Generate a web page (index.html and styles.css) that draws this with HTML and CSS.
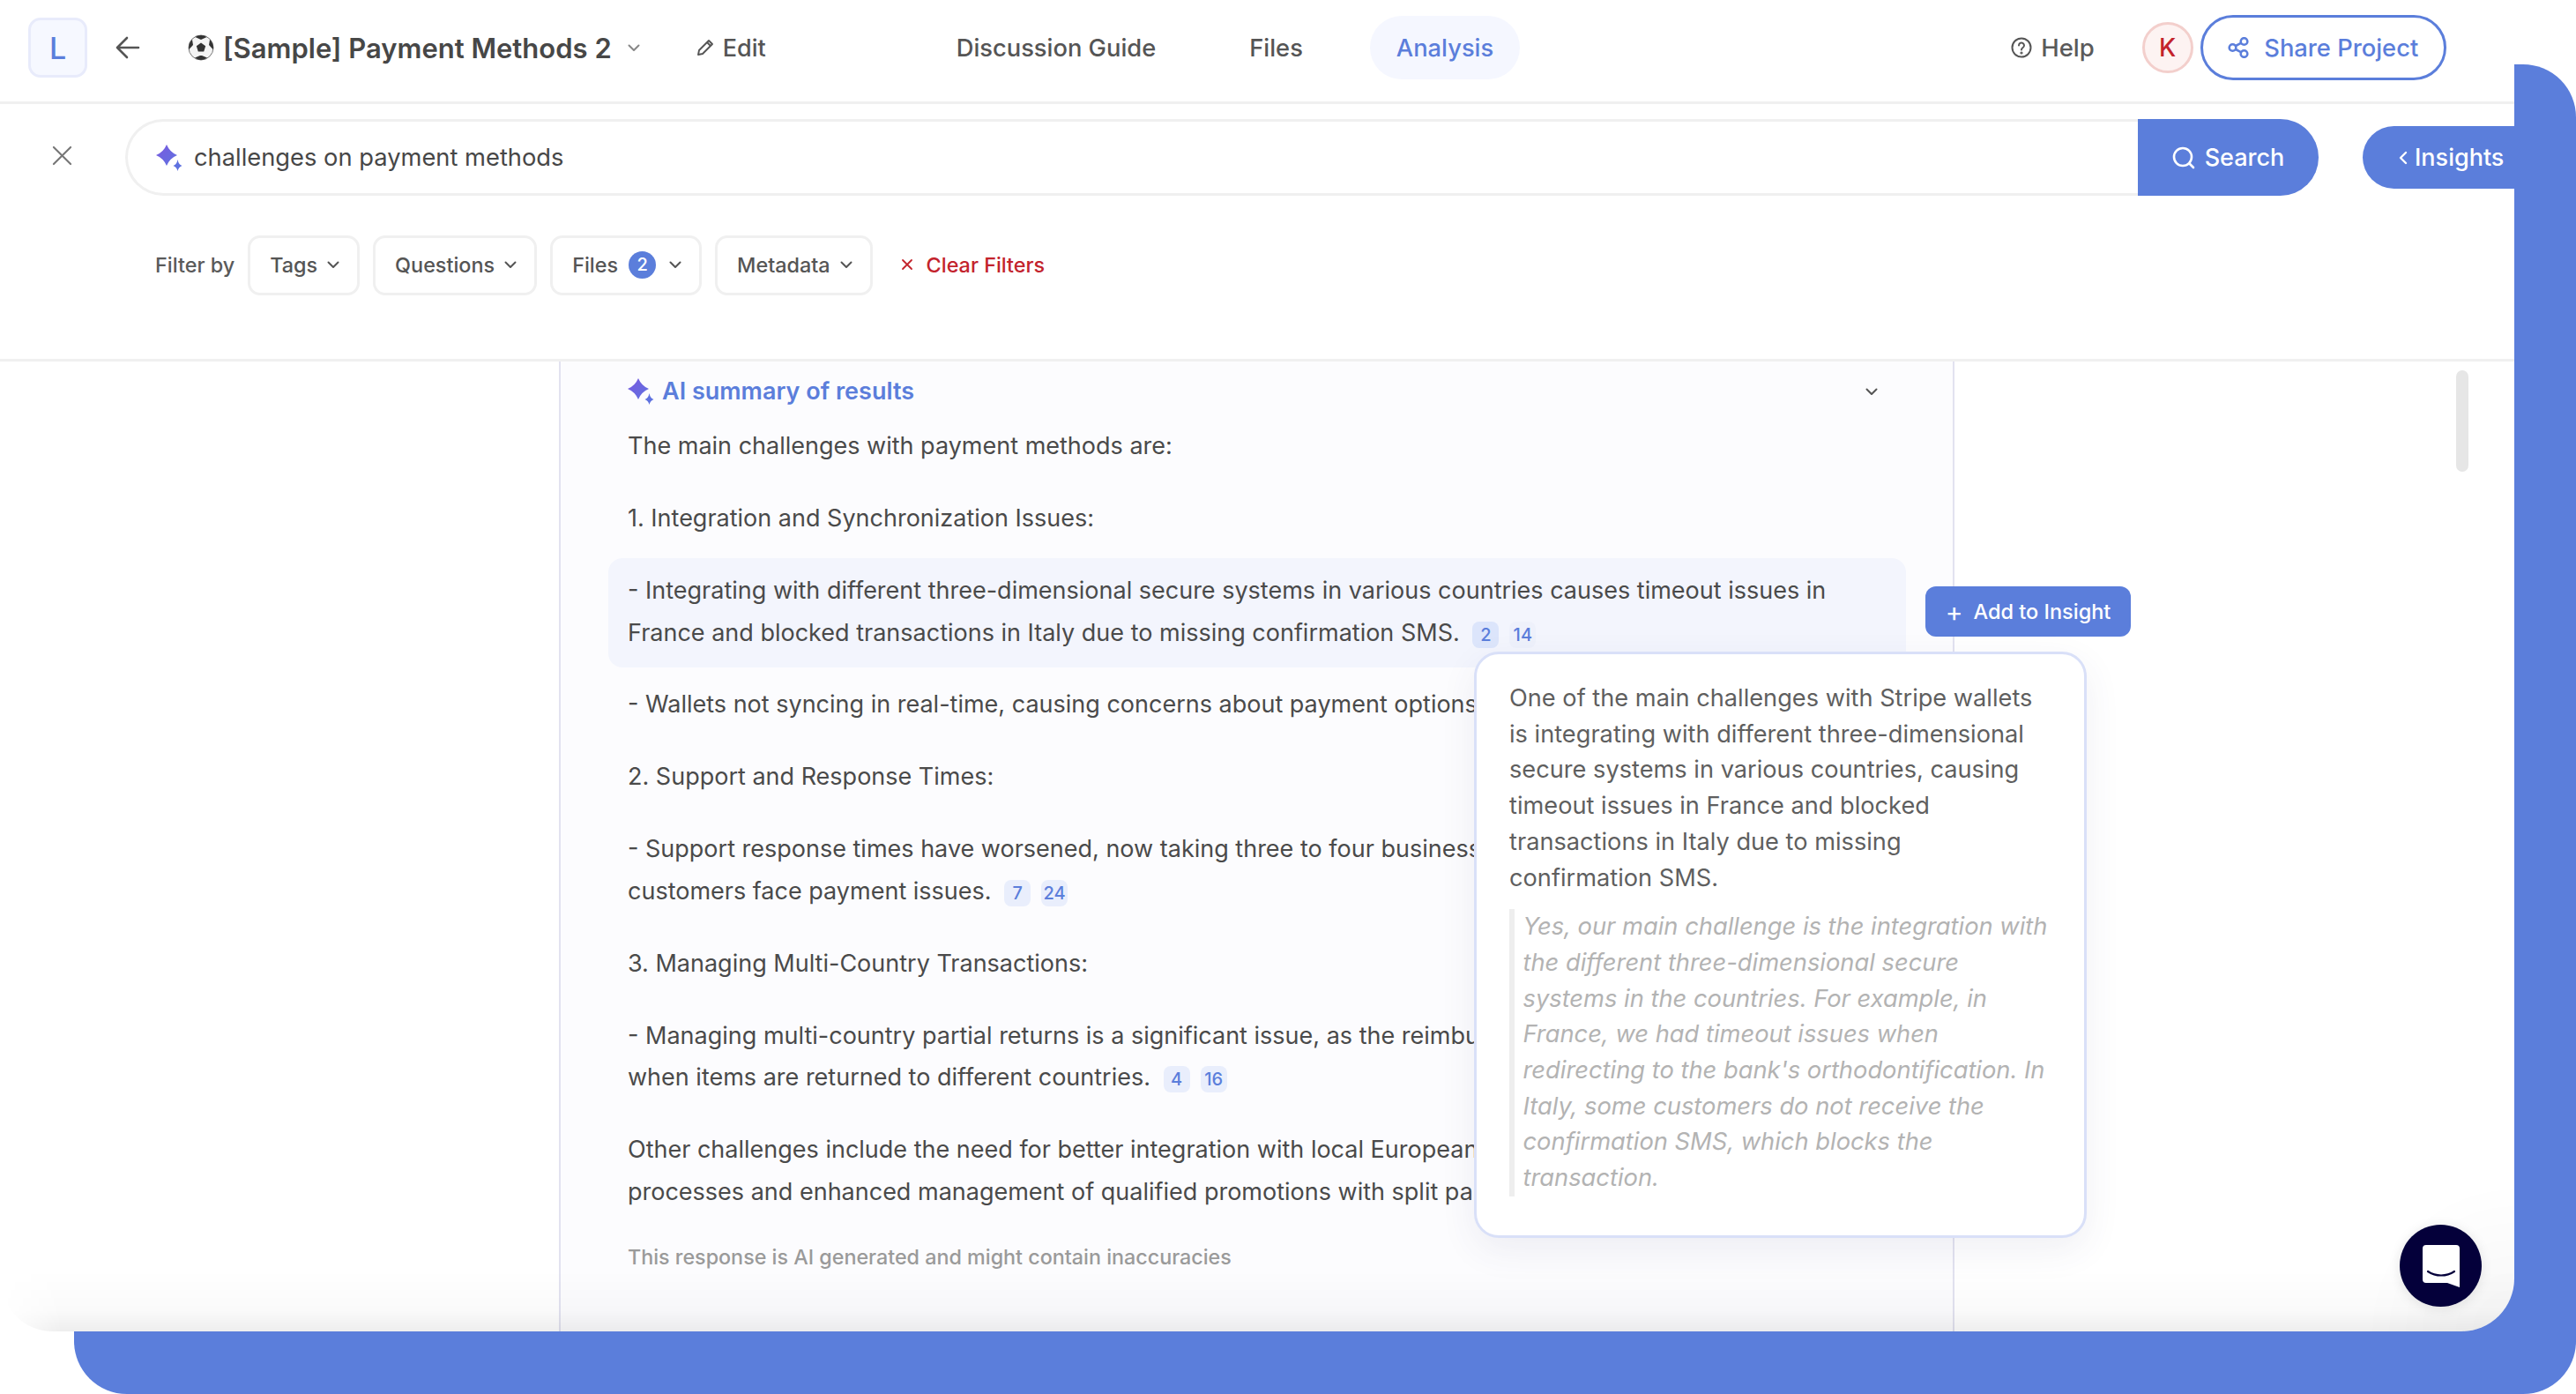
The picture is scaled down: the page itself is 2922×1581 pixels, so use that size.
FILE: index.html
```html
<!DOCTYPE html>
<html lang="en">
<head>
    <meta charset="UTF-8">
    <meta name="viewport" content="width=device-width, initial-scale=1.0">
    <title>[Sample] Payment Methods 2 - Analysis</title>
    <link rel="stylesheet" href="styles.css">
</head>
<body>
    <svg class="defs" width="0" height="0">
        <defs>
            <linearGradient id="spark" x1="0" y1="0" x2="1" y2="1">
                <stop offset="0" stop-color="#7a5ae0"/>
                <stop offset="1" stop-color="#5f72e0"/>
            </linearGradient>
        </defs>
    </svg>

    <div class="backdrop"></div>

    <div class="panel">
        <header class="topbar">
            <div class="logo">L</div>
            <svg class="back" viewBox="0 0 28 26" fill="none" stroke="#555" stroke-width="2.6" stroke-linecap="round" stroke-linejoin="round"><path d="M26 13H2M13 2 2 13l11 11"/></svg>
            <svg class="ball" viewBox="0 0 30 30">
                <circle cx="15" cy="15" r="14" fill="#f4f4f4" stroke="#777" stroke-width="1"/>
                <path d="M15 9.500l5.200 3.800-2 6.200h-6.400l-2-6.200z" fill="#333"/>
                <path d="M15 1c2.600 0 4.800.7 6.600 2L15 6 8.400 3C10.200 1.700 12.400 1 15 1zM1.200 14c.2-3.400 1.600-6.300 3.800-8.300L6 12l-4.800 5.200c0-1-.1-2.100 0-3.200zM29 15c0 .8 0 1.500-.2 2.200L24 12l1-6.300c2.400 2.300 4 5.700 4 9.300zM8 26.600l6-2.600h2l6 2.600c-2 1.500-4.300 2.400-7 2.400s-5-.9-7-2.400z" fill="#333"/>
            </svg>
            <span class="project-name">[Sample] Payment Methods 2</span>
            <svg class="chev chev-title" viewBox="0 0 14 9"><path d="M1.500 1.500 7 7l5.500-5.500"/></svg>
            <svg class="pencil" viewBox="0 0 20 20" fill="none" stroke="#555" stroke-width="1.900" stroke-linejoin="round"><path d="M2 18l1-5L14 2l4 4L7 17z"/><path d="M12 4l4 4"/></svg>
            <span class="edit">Edit</span>

            <nav class="tabs">
                <a class="tab">Discussion Guide</a>
                <a class="tab">Files</a>
                <a class="tab tab-active">Analysis</a>
            </nav>

            <div class="help">
                <svg viewBox="0 0 24 24" fill="none" stroke="#555" stroke-width="2"><circle cx="12" cy="12" r="10.500"/><path d="M9 9.500a3 3 0 1 1 4.600 2.500c-1 .7-1.600 1.300-1.600 2.500" stroke-linecap="round"/><circle cx="12" cy="18" r=".6" fill="#555"/></svg>
                <span>Help</span>
            </div>
            <div class="avatar">K</div>
            <button class="share">
                <svg viewBox="0 0 24 24" fill="none" stroke="#5b7edb" stroke-width="2.600"><circle cx="5.500" cy="12" r="3.800"/><circle cx="18.500" cy="5" r="3.800"/><circle cx="18.500" cy="19" r="3.800"/><path d="M9 10l6-3.200M9 14l6 3.200"/></svg>
                Share Project
            </button>
        </header>

        <div class="search-row">
            <svg class="close" viewBox="0 0 24 24" fill="none" stroke="#777" stroke-width="2.200" stroke-linecap="round"><path d="M2 2l20 20M22 2 2 22"/></svg>
            <div class="searchbox">
                <svg class="spark" viewBox="0 0 30 30"><path d="M12 0Q15.500 8.500 24 12 15.500 15.500 12 24 8.500 15.500 0 12 8.500 8.500 12 0z" fill="url(#spark)"/><path d="M24.500 17Q25.500 22.500 29.500 24 25.500 25.500 24.500 30 23.500 25.500 19.500 24 23.500 22.500 24.500 17z" fill="#5f72e0"/></svg>
                <span class="query">challenges on payment methods</span>
                <button class="search-btn">
                    <svg viewBox="0 0 26 26" fill="none" stroke="#fff" stroke-width="2.600" stroke-linecap="round"><circle cx="12" cy="12" r="10"/><path d="M19.500 19.500 24 24"/></svg>
                    Search
                </button>
            </div>
            <button class="insights-btn">
                <svg viewBox="0 0 10 16" fill="none" stroke="#fff" stroke-width="2.400" stroke-linecap="round" stroke-linejoin="round"><path d="M8 2 2 8l6 6"/></svg>
                Insights
            </button>
        </div>

        <div class="filter-row">
            <span class="filter-label">Filter by</span>
            <button class="chip">Tags<svg class="chev" viewBox="0 0 14 9"><path d="M1.500 1.500 7 7l5.500-5.500"/></svg></button>
            <button class="chip">Questions<svg class="chev" viewBox="0 0 14 9"><path d="M1.500 1.500 7 7l5.500-5.500"/></svg></button>
            <button class="chip">Files<span class="count">2</span><svg class="chev" viewBox="0 0 14 9"><path d="M1.500 1.500 7 7l5.500-5.500"/></svg></button>
            <button class="chip">Metadata<svg class="chev" viewBox="0 0 14 9"><path d="M1.500 1.500 7 7l5.500-5.500"/></svg></button>
            <button class="clear">
                <svg viewBox="0 0 14 14" fill="none" stroke="#c3232c" stroke-width="1.800" stroke-linecap="round"><path d="M2 2l10 10M12 2 2 12"/></svg>
                Clear Filters
            </button>
        </div>

        <main class="results">
            <section class="summary">
                <div class="summary-head">
                    <svg class="spark" viewBox="0 0 30 30"><path d="M12 0Q15.500 8.500 24 12 15.500 15.500 12 24 8.500 15.500 0 12 8.500 8.500 12 0z" fill="url(#spark)"/><path d="M24.500 17Q25.500 22.500 29.500 24 25.500 25.500 24.500 30 23.500 25.500 19.500 24 23.500 22.500 24.500 17z" fill="#5f72e0"/></svg>
                    <span class="summary-title">AI summary of results</span>
                    <svg class="chev chev-summary" viewBox="0 0 14 9"><path d="M1.500 1.500 7 7l5.500-5.500"/></svg>
                </div>

                <p>The main challenges with payment methods are:</p>
                <p>1. Integration and Synchronization Issues:</p>
                <p class="highlight">- Integrating with different three-dimensional secure systems in various countries causes timeout issues in<br>France and blocked transactions in Italy due to missing confirmation SMS. <a class="ref ref-on">2</a><a class="ref ref-soft">14</a></p>
                <p>- Wallets not syncing in real-time, causing concerns about payment options</p>
                <p>2. Support and Response Times:</p>
                <p>- Support response times have worsened, now taking three to four business<br>customers face payment issues. <a class="ref">7</a><a class="ref">24</a></p>
                <p>3. Managing Multi-Country Transactions:</p>
                <p>- Managing multi-country partial returns is a significant issue, as the reimbu<br>when items are returned to different countries. <a class="ref">4</a><a class="ref">16</a></p>
                <p>Other challenges include the need for better integration with local European<br>processes and enhanced management of qualified promotions with split pa</p>
                <p class="disclaimer">This response is AI generated and might contain inaccuracies</p>
            </section>

            <button class="add-insight"><span class="plus">+</span>Add to Insight</button>

            <div class="tooltip">
                <p class="tip-text">One of the main challenges with Stripe wallets is integrating with different three-dimensional secure systems in various countries, causing timeout issues in France and blocked transactions in Italy due to missing confirmation SMS.</p>
                <blockquote class="tip-quote">Yes, our main challenge is the integration with the different three-dimensional secure systems in the countries. For example, in France, we had timeout issues when redirecting to the bank's orthodontification. In Italy, some customers do not receive the confirmation SMS, which blocks the transaction.</blockquote>
            </div>

            <div class="scrollbar"></div>
        </main>

        <button class="chat">
            <svg viewBox="0 0 42 48"><path d="M4 0h34a4 4 0 0 1 4 4v44l-14-5H4a4 4 0 0 1-4-4V4a4 4 0 0 1 4-4z" fill="#fff"/><path d="M6 30c9 6 21 6 30 0" fill="none" stroke="#04003a" stroke-width="2.200" stroke-linecap="round"/></svg>
        </button>
    </div>
</body>
</html>
```

FILE: styles.css
```css
:root {
    --blue: #5b7edb;
    --text: #4a4a4a;
    --line: #f0f0f0;
    --red: #c3232c;
}

* {
    box-sizing: border-box;
}

html, body {
    margin: 0;
    height: 1581px;
    overflow: hidden;
    background: #fff;
}

body {
    position: relative;
    font-family: Inter, "Liberation Sans", sans-serif;
    color: var(--text);
}

button {
    font-family: inherit;
    cursor: pointer;
}

.defs {
    position: absolute;
}

/* Blue frame behind the app window */
.backdrop {
    position: absolute;
    left: 84px;
    top: 73px;
    right: 0;
    bottom: 0;
    background: var(--blue);
    border-radius: 70px 60px 60px 60px;
}

.panel {
    position: relative;
    width: 2852px;
    height: 1510px;
    background: #fff;
    border-radius: 0 0 60px 60px;
    overflow: hidden;
    display: flex;
    flex-direction: column;
}

/* Soft shade along the bottom of the window */
.panel::after {
    content: "";
    position: absolute;
    left: 0;
    right: 0;
    bottom: 0;
    height: 200px;
    background:
        linear-gradient(to top, rgba(0, 0, 0, 0.065), rgba(0, 0, 0, 0.02) 24px, transparent 70px),
        radial-gradient(circle at 100% 100%, rgba(0, 0, 0, 0.035), transparent 170px);
    -webkit-mask-image: linear-gradient(to right, transparent, #000 70px);
    mask-image: linear-gradient(to right, transparent, #000 70px);
    pointer-events: none;
}

/* Top bar */
.topbar {
    height: 118px;
    flex: none;
    display: flex;
    align-items: center;
    padding: 0 0 7px 32px;
    border-bottom: 3px solid var(--line);
}

.logo {
    width: 67px;
    height: 68px;
    display: flex;
    align-items: center;
    justify-content: center;
    background: #f6f8ff;
    border: 3px solid #e8ebfb;
    border-radius: 14px;
    color: var(--blue);
    font-size: 34px;
    font-weight: 500;
}

.back {
    width: 28px;
    height: 26px;
    margin-left: 32px;
}

.ball {
    width: 30px;
    height: 30px;
    margin-left: 54px;
}

.project-name {
    margin-left: 10px;
    font-size: 31px;
    font-weight: 600;
    color: #474747;
    white-space: nowrap;
}

.chev {
    width: 14px;
    height: 9px;
    fill: none;
    stroke: #555;
    stroke-width: 2;
    stroke-linecap: round;
    stroke-linejoin: round;
}

.chev-title {
    margin-left: 18px;
    stroke: #888;
}

.pencil {
    width: 20px;
    height: 20px;
    margin-left: 64px;
}

.edit {
    margin-left: 10px;
    font-size: 27px;
    font-weight: 500;
    color: #555;
}

.tabs {
    display: flex;
    align-items: center;
    margin-left: 188px;
    font-size: 27.300px;
    font-weight: 500;
    color: #555;
}

.tab {
    padding: 0 28px;
    height: 72px;
    display: flex;
    align-items: center;
    border-radius: 36px;
}

.tab + .tab {
    margin-left: 50px;
}

.tab.tab-active {
    margin-left: 48px;
    padding: 0 30px;
    background: #f5f7ff;
    color: var(--blue);
}

.help {
    display: flex;
    align-items: center;
    gap: 10px;
    margin-left: 557px;
    font-size: 27.500px;
    font-weight: 500;
    color: #5a5a5a;
}

.help svg {
    width: 24px;
    height: 24px;
}

.avatar {
    width: 58px;
    height: 58px;
    margin-left: 54px;
    display: flex;
    align-items: center;
    justify-content: center;
    background: #fdf3f2;
    border: 3px solid #f3cfcc;
    border-radius: 50%;
    color: var(--red);
    font-size: 28px;
    font-weight: 500;
}

.share {
    width: 279px;
    height: 74px;
    margin-left: 8px;
    display: flex;
    align-items: center;
    justify-content: center;
    gap: 17px;
    background: #fff;
    border: 3px solid var(--blue);
    border-radius: 37px;
    color: var(--blue);
    font-size: 27.300px;
    font-weight: 500;
}

.share svg {
    width: 24px;
    height: 24px;
}

/* Search */
.search-row {
    flex: none;
    display: flex;
    align-items: center;
    margin-top: 17px;
    padding-left: 59px;
}

.close {
    width: 23px;
    height: 23px;
    margin: -5px 60px 0 0;
}

.searchbox {
    width: 2488px;
    height: 87px;
    display: flex;
    align-items: center;
    border: 3px solid var(--line);
    border-right: none;
    border-radius: 44px;
    padding-left: 32px;
}

.spark {
    width: 30px;
    height: 30px;
    flex: none;
}

.query {
    margin-left: 13px;
    font-size: 27.300px;
    color: #474747;
}

.search-btn {
    width: 205px;
    height: 87px;
    margin: -3px 0 -3px auto;
    display: flex;
    align-items: center;
    justify-content: center;
    gap: 11px;
    background: var(--blue);
    border: none;
    border-radius: 0 44px 44px 0;
    color: #fff;
    font-size: 27px;
    font-weight: 500;
}

.search-btn svg {
    width: 26px;
    height: 26px;
}

.insights-btn {
    width: 172px;
    height: 71px;
    margin-left: 50px;
    display: flex;
    align-items: center;
    padding-left: 41px;
    gap: 8px;
    background: var(--blue);
    border: none;
    border-radius: 36px 0 0 36px;
    color: #fff;
    font-size: 27px;
    font-weight: 500;
}

.insights-btn svg {
    width: 10px;
    height: 16px;
}

/* Filters */
.filter-row {
    flex: none;
    height: 143px;
    display: flex;
    align-items: flex-start;
    gap: 15px;
    margin-top: 45px;
    padding-left: 176px;
    border-bottom: 3px solid var(--line);
    font-size: 23.400px;
    font-weight: 500;
}

.filter-label {
    line-height: 67px;
    color: #5a5a5a;
}

.chip {
    height: 68px;
    display: flex;
    align-items: center;
    gap: 11px;
    padding: 0 20px 2px 22px;
    background: #fff;
    border: 3px solid var(--line);
    border-radius: 14px;
    color: #555;
    font-size: 23.400px;
    font-weight: 500;
}

.count {
    width: 31px;
    height: 31px;
    margin: 0 4px 0 1px;
    display: flex;
    align-items: center;
    justify-content: center;
    background: var(--blue);
    border-radius: 50%;
    color: #fff;
    font-size: 20px;
}

.clear {
    height: 68px;
    margin-left: 17px;
    display: flex;
    align-items: center;
    gap: 15px;
    padding: 0 0 2px;
    background: none;
    border: none;
    color: var(--red);
    font-size: 23.400px;
    font-weight: 500;
}

.clear svg {
    width: 14px;
    height: 14px;
}

/* Results */
.results {
    flex: 1;
    position: relative;
    min-height: 0;
}

.summary {
    width: 1583px;
    height: 100%;
    margin-left: 634px;
    padding: 18px 0 0 76px;
    background: #fcfcfe;
    border-left: 2px solid #e2e2f0;
    border-right: 2px solid #e2e2f0;
    font-size: 27px;
    line-height: 47.500px;
    color: #4a4a4a;
}

.summary p {
    margin: 0 0 34.500px;
    white-space: nowrap;
}

.summary-head {
    display: flex;
    align-items: center;
    height: 32px;
    margin: 0 85px 22px 0;
}

.summary-title {
    margin-left: 9px;
    color: var(--blue);
    font-size: 27px;
    font-weight: 600;
}

.chev-summary {
    margin-left: auto;
}

.summary .highlight {
    width: 1472px;
    margin: -13px 0 18px -22px;
    padding: 13px 0 16px 22px;
    background: #f3f5fd;
    border-radius: 16px;
}

.ref {
    display: inline-block;
    width: 30px;
    height: 30px;
    margin-left: 7px;
    background: #e9eefc;
    border-radius: 8px;
    color: var(--blue);
    font-size: 20px;
    font-weight: 500;
    line-height: 30px;
    text-align: center;
    vertical-align: 0;
}

.ref + .ref {
    margin-left: 12px;
}

.ref-on {
    background: #dce5fb;
}

.ref-soft {
    background: #eef1fb;
}

.summary .disclaimer {
    margin-top: -4px;
    font-size: 23.300px;
    line-height: 40px;
    color: #9a9a9a;
    font-weight: 500;
}

.add-insight {
    position: absolute;
    left: 2184px;
    top: 255px;
    width: 233px;
    height: 57px;
    display: flex;
    align-items: center;
    justify-content: center;
    gap: 12px;
    background: var(--blue);
    border: none;
    border-radius: 12px;
    color: #fff;
    font-size: 23.500px;
    font-weight: 500;
}

.plus {
    font-size: 30px;
    font-weight: 400;
    line-height: 1;
}

.tooltip {
    position: absolute;
    left: 1672px;
    top: 329px;
    width: 695px;
    height: 665px;
    padding: 30px 35px 0 37px;
    background: #fff;
    border: 3px solid #d9e0f8;
    border-radius: 28px;
    box-shadow: 0 14px 40px rgba(60, 70, 120, 0.08);
    font-size: 27.200px;
    line-height: 40.700px;
    color: #5f5f5f;
}

.tip-text {
    margin: 0 0 15px;
    padding-right: 11px;
}

.tip-quote {
    margin: 0;
    padding-left: 9.500px;
    border-left: 6px solid #eeeeee;
    font-size: 27.300px;
    color: #b3b3b3;
    font-style: italic;
}

.scrollbar {
    position: absolute;
    left: 2786px;
    top: 10px;
    width: 14px;
    height: 115px;
    background: #e6e6e6;
    border-radius: 8px;
}

/* Chat launcher */
.chat {
    position: absolute;
    left: 2722px;
    top: 1389px;
    width: 93px;
    height: 93px;
    display: flex;
    align-items: center;
    justify-content: center;
    padding: 0;
    background: #04003a;
    border: none;
    border-radius: 50%;
    box-shadow: 0 2px 14px rgba(0, 0, 0, 0.1);
    z-index: 2;
}

.chat svg {
    width: 42px;
    height: 48px;
}
```
